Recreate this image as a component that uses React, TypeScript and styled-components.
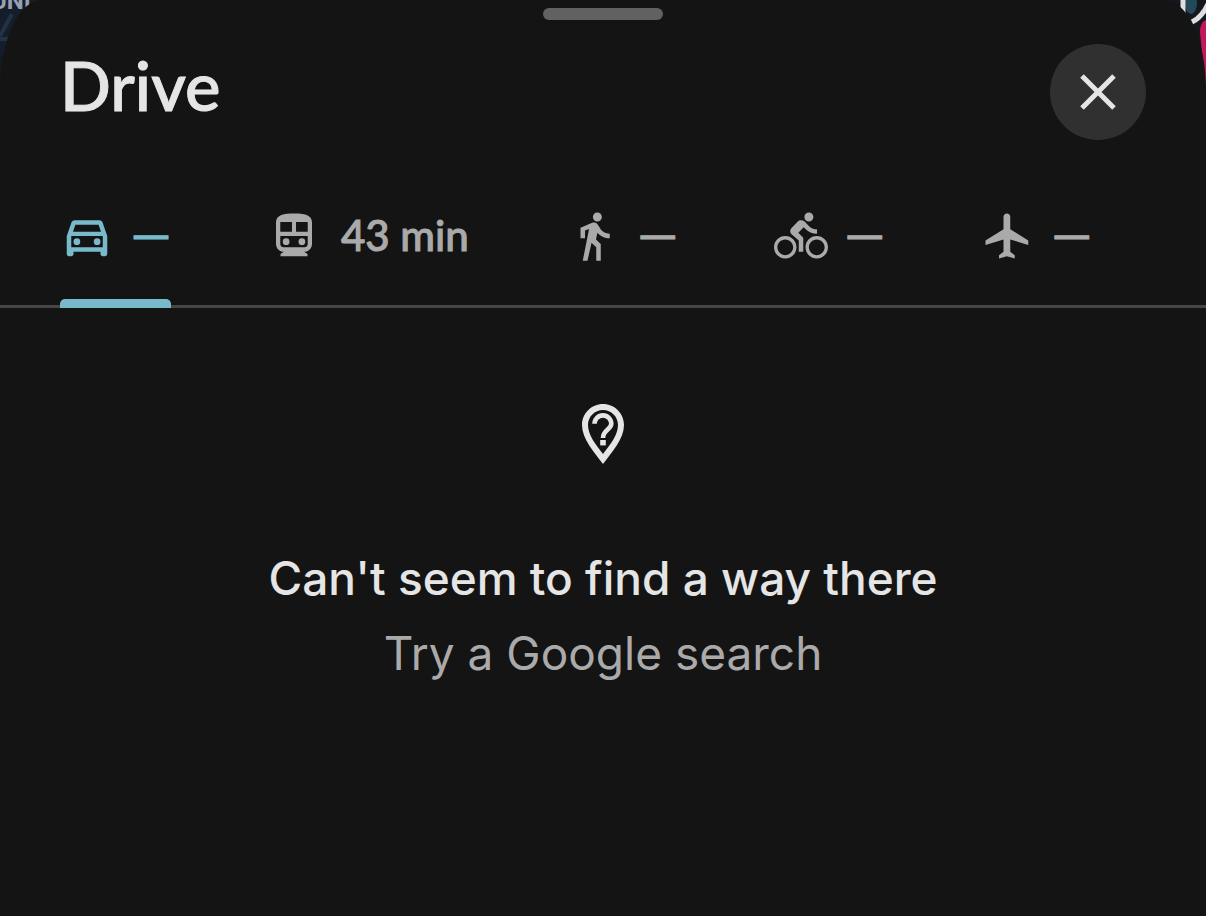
import React from "react";
import styled, { createGlobalStyle } from "styled-components";

const Global = createGlobalStyle`
  * { box-sizing: border-box; }
  body { margin: 0; background: #141414; }
`;

const Page = styled.div`
  position: relative;
  min-height: 100vh;
  background: #141414;
`;

const MapCorner = styled.svg<{ $side: "left" | "right" }>`
  position: absolute;
  top: 0;
  ${(p) => p.$side}: 0;
  width: 50px;
  height: 110px;
`;

const Sheet = styled.main`
  position: relative;
  min-height: 100vh;
  padding-top: 8px;
  background: #141414;
  border-radius: 42px 42px 0 0 / 90px 90px 0 0;
`;

const Handle = styled.div`
  width: 120px;
  height: 12px;
  margin: 0 auto;
  border-radius: 6px;
  background: #616161;
`;

const Header = styled.header`
  display: flex;
  justify-content: space-between;
  align-items: flex-start;
  padding: 24px 60px 0;
`;

const Title = styled.h1`
  margin: 0;
  color: #e5e5e5;
  font: 500 67px/82px Lato, "Open Sans", sans-serif;
  -webkit-text-stroke: 1px currentColor;
`;

const CloseButton = styled.button`
  display: flex;
  align-items: center;
  justify-content: center;
  width: 96px;
  height: 96px;
  padding: 0;
  border: 0;
  border-radius: 50%;
  background: #303030;
  cursor: pointer;
`;

const Tabs = styled.div`
  display: flex;
  gap: 96px;
  margin-top: 42px;
  padding: 0 60px;
  border-bottom: 3px solid #464646;
`;

const Tab = styled.button<{ $active?: boolean }>`
  position: relative;
  display: flex;
  flex: none;
  align-items: center;
  gap: 20px;
  height: 123px;
  padding: 0 0 15px;
  border: 0;
  background: none;
  color: ${(p) => (p.$active ? "#78b9cb" : "#aaaaaa")};
  cursor: pointer;

  &::after {
    content: "";
    display: ${(p) => (p.$active ? "block" : "none")};
    position: absolute;
    left: 0;
    right: 0;
    bottom: -3px;
    height: 9px;
    border-radius: 5px 5px 0 0;
    background: #78b9cb;
  }
`;

const TabIcon = styled.svg`
  flex: none;
  width: 54px;
  height: 54px;
  fill: currentColor;
`;

const Duration = styled.span`
  padding: 0 2px 2px 0;
  font: 500 42px/52px Lato, "Open Sans", sans-serif;
  -webkit-text-stroke: 1px currentColor;
`;

const NoDuration = styled.span`
  padding: 0 3px 4px 0;
  font: 700 34px/48px "Liberation Sans", Arial, sans-serif;
  -webkit-text-stroke: 1px currentColor;
`;

const Empty = styled.section`
  display: flex;
  flex-direction: column;
  align-items: center;
  padding: 96px 24px 48px;
  font-family: Inter, "Liberation Sans", sans-serif;
  font-size: 46px;
  line-height: 75px;
  text-align: center;
`;

const Headline = styled.h2`
  margin: 77px 0 0;
  color: #e5e5e5;
  font-size: inherit;
  font-weight: 500;
`;

const SearchLink = styled.a`
  color: #aaaaaa;
  text-decoration: none;
`;

const modes = [
  {
    name: "Drive",
    path: "M18.92 6.01C18.72 5.42 18.16 5 17.5 5h-11c-.66 0-1.21.42-1.42 1.01L3 12v8c0 .55.45 1 1 1h1c.55 0 1-.45 1-1v-1h12v1c0 .55.45 1 1 1h1c.55 0 1-.45 1-1v-8zM6.85 7h10.29l1.08 3.11H5.77zM19 17H5v-5h14zM6 14.5a1.5 1.5 0 1 0 3 0a1.5 1.5 0 1 0-3 0M15 14.5a1.5 1.5 0 1 0 3 0a1.5 1.5 0 1 0-3 0",
  },
  {
    name: "Transit",
    time: "43 min",
    path: "M12 2C7.6 2 4 2.5 4 6v9.5C4 17.43 5.57 19 7.5 19L6 20v1h12v-1l-1.5-1c1.93 0 3.5-1.57 3.5-3.5V6c0-3.5-3.6-4-8-4zM5.9 5.8h5.2v4.3H5.9zM12.9 5.8h5.2v4.3h-5.2zM5.9 12h12.2v3.5c0 .83-.67 1.5-1.5 1.5H7.4c-.83 0-1.5-.67-1.5-1.5zM7 14.5a1.5 1.5 0 1 0 3 0a1.5 1.5 0 1 0-3 0M14 14.5a1.5 1.5 0 1 0 3 0a1.5 1.5 0 1 0-3 0",
  },
  {
    name: "Walk",
    path: "M13.5 5.5c1.1 0 2-.9 2-2s-.9-2-2-2-2 .9-2 2 .9 2 2 2zM9.8 8.9L7 23h2.1l1.8-8 2.1 2v6h2v-7.5l-2.1-2 .6-3C14.8 12 16.8 13 19 13v-2c-1.9 0-3.5-1-4.3-2.4l-1-1.6c-.4-.6-1-1-1.7-1-.3 0-.5.1-.8.1L6 8.3V13h2V9.6l1.8-.7",
  },
  {
    name: "Cycle",
    path: "M15.5 5.5c1.1 0 2-.9 2-2s-.9-2-2-2-2 .9-2 2 .9 2 2 2zM5 12c-2.8 0-5 2.2-5 5s2.2 5 5 5 5-2.2 5-5-2.2-5-5-5zm0 8.5c-1.9 0-3.5-1.6-3.5-3.5s1.6-3.5 3.5-3.5 3.5 1.6 3.5 3.5-1.6 3.5-3.5 3.5zm5.8-10l2.4-2.4.8.8c1.3 1.3 3 2.1 5.1 2.1V9c-1.5 0-2.7-.6-3.6-1.5l-1.9-1.9c-.5-.4-1-.6-1.6-.6s-1.1.2-1.4.6L7.8 8.4c-.4.4-.6.9-.6 1.4 0 .6.2 1.1.6 1.4L11 14v5h2v-6.2l-2.2-2.3zM19 12c-2.8 0-5 2.2-5 5s2.2 5 5 5 5-2.2 5-5-2.2-5-5-5zm0 8.5c-1.9 0-3.5-1.6-3.5-3.5s1.6-3.5 3.5-3.5 3.5 1.6 3.5 3.5-1.6 3.5-3.5 3.5z",
  },
  {
    name: "Fly",
    path: "M21 16v-2l-8-5V3.5c0-.83-.67-1.5-1.5-1.5S10 2.67 10 3.5V9l-8 5v2l8-2.5V19l-2 1.5V22l3.5-1 3.5 1v-1.5L13 19v-5.5z",
  },
];

export default function App() {
  return (
    <Page>
      <Global />
      <MapCorner $side="left" viewBox="0 0 50 110" aria-hidden="true">
        <rect width="50" height="110" fill="#141e2b" />
        <path d="M0 36L12 14M0 39h12" stroke="#233145" strokeWidth="4" />
        <path d="M0 55v60h10V55z" fill="#131b22" />
        <text x="-9" y="9" fill="#9aa0b0" fontFamily="Roboto" fontWeight="700" fontSize="24">UNI</text>
      </MapCorner>
      <MapCorner $side="right" viewBox="0 0 50 110" aria-hidden="true">
        <rect width="50" height="110" fill="#14181e" />
        <ellipse cx="35" cy="3" rx="6" ry="11" fill="#24495a" />
        <path d="M27 0v16M52 4q-6 13-16 18" fill="none" stroke="#dedede" strokeWidth="5" />
        <path d="M50 20q-6 2-6 12l5 52h1z" fill="#c2185b" />
      </MapCorner>
      <Sheet>
        <Handle />
        <Header>
          <Title>Drive</Title>
          <CloseButton aria-label="Close">
            <svg width="36" height="36" viewBox="0 0 36 36" aria-hidden="true">
              <path d="M2 2L34 34M34 2L2 34" stroke="#e5e5e5" strokeWidth="5" />
            </svg>
          </CloseButton>
        </Header>
        <Tabs role="tablist" aria-label="Travel mode">
          {modes.map((mode, i) => (
            <Tab
              key={mode.name}
              role="tab"
              aria-label={mode.time ? `${mode.name} ${mode.time}` : mode.name}
              aria-selected={i === 0}
              $active={i === 0}
            >
              <TabIcon viewBox="0 0 24 24" aria-hidden="true">
                <path fillRule="evenodd" d={mode.path} />
              </TabIcon>
              {mode.time ? <Duration>{mode.time}</Duration> : <NoDuration>—</NoDuration>}
            </Tab>
          ))}
        </Tabs>
        <Empty>
          <svg width="42" height="60" viewBox="0 0 42 60" aria-hidden="true">
            <path
              fill="#e5e5e5"
              fillRule="evenodd"
              d="M21 0C9.4 0 0 9.4 0 21C0 35 12 48 21 60C30 48 42 35 42 21C42 9.4 32.6 0 21 0zM21 6C12.7 6 6 12.7 6 21C6 31 14 41 21 50C28 41 36 31 36 21C36 12.7 29.3 6 21 6z"
            />
            <path d="M12.5 19.8a8.4 8.4 0 0 1 16.8 0C29.3 25.5 21 26 21 34" fill="none" stroke="#e5e5e5" strokeWidth="4.6" />
            <rect x="18.2" y="36" width="5.6" height="5.4" fill="#e5e5e5" />
          </svg>
          <Headline>Can't seem to find a way there</Headline>
          <SearchLink href="#search">Try a Google search</SearchLink>
        </Empty>
      </Sheet>
    </Page>
  );
}
